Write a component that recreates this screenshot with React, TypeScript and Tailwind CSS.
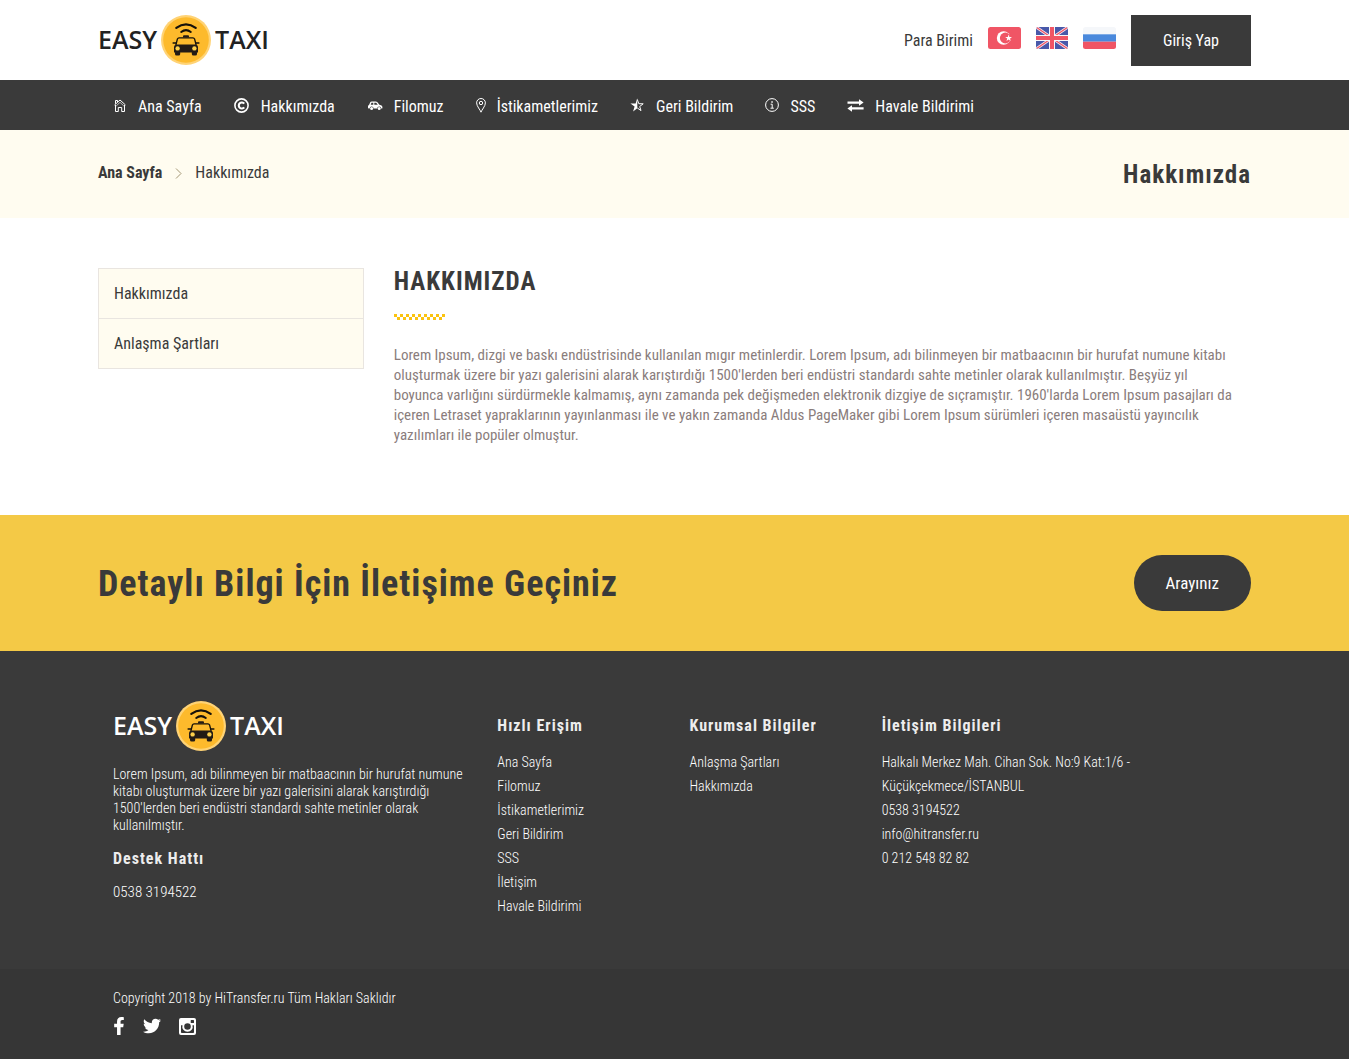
import React from 'react';
import { FaFacebookF, FaTwitter } from 'react-icons/fa';

interface LinkItem {
    label: string;
    href: string;
}

interface NavItem extends LinkItem {
    icon: React.ReactNode;
}

const HomeIcon = () => (
    <svg width="13" height="13" viewBox="0 0 13 13" fill="none" stroke="currentColor">
        <path d="M0.5 6L6 1L11.5 6M1.5 4.8V1.5H3.5V3" />
        <path d="M1.5 6V12.5H4.3V8.5H7.7V12.5H10.5V6" />
        <path d="M2.2 7L6 3.3L9.8 7" strokeWidth="0.7" />
    </svg>
);

const CopyrightIcon = () => (
    <svg width="16" height="15" viewBox="0 0 16 15" fill="none" stroke="currentColor">
        <circle cx="7.5" cy="7.5" r="6.6" strokeWidth="1.6" />
        <path d="M10.2 5.7A3 3 0 1 0 10.2 9.3" strokeWidth="2.1" />
    </svg>
);

const CarIcon = () => (
    <svg width="16" height="15" viewBox="0 0 16 15" fill="currentColor">
        <path
            fillRule="evenodd"
            d="M2 6.9L3.4 4.1Q3.8 3.4 4.8 3.4H8.6Q9.6 3.4 10.2 4L12.4 6.7L14 7.2Q15.4 7.7 15.4 9V9.9Q15.4 10.5 14.7 10.5H14.2A2 2 0 0 0 10.2 10.5H6.6A2 2 0 0 0 2.6 10.5H1.7Q1 10.5 1 9.8V8.1Q1 7.2 2 6.9ZM4.5 4.7L3.7 6.7H6.3V4.7ZM7.3 4.7V6.7H10.8L9.2 4.7Z"
        />
        <circle cx="4.6" cy="10.6" r="1.5" />
        <circle cx="12.2" cy="10.6" r="1.5" />
    </svg>
);

const PinIcon = () => (
    <svg width="10" height="15" viewBox="0 0 10 15" fill="none" stroke="currentColor">
        <path d="M5 14.2C4.4 12 0.6 8.2 0.6 4.9A4.4 4.4 0 0 1 9.4 4.9C9.4 8.2 5.6 12 5 14.2Z" />
        <circle cx="5" cy="5" r="1.7" />
    </svg>
);

const StarIcon = () => (
    <svg width="15" height="14" viewBox="0 0 15 14" fill="none" stroke="currentColor">
        <path d="M7.3 0.3V10.3L3.1 13.4L4.6 8.6L0.4 5.4H5.6Z" fill="currentColor" stroke="none" />
        <path d="M7.3 1.5L8.8 5.7L13.2 5.8L9.7 8.5L11 12.6L7.3 10" />
    </svg>
);

const InfoIcon = () => (
    <svg width="14" height="14" viewBox="0 0 14 14" fill="none" stroke="currentColor">
        <circle cx="7" cy="7" r="6.4" />
        <path d="M5.6 6.2H7.2V10M5.5 10.2H8.8" />
        <path d="M6.3 4H7.8" strokeWidth="1.4" />
    </svg>
);

const ExchangeIcon = () => (
    <svg width="17" height="13" viewBox="0 0 17 13" fill="currentColor">
        <path d="M0.5 2.4H12V0.3L16.6 3.6L12 6.7V4.7H0.5Z" />
        <path d="M16.6 8.3H5V6.3L0.4 9.5L5 12.7V10.6H16.6Z" />
    </svg>
);

const ChevronIcon = () => (
    <svg width="7" height="11" viewBox="0 0 7 11" fill="none" stroke="#a39675">
        <path d="M1 0.5L6 5.5L1 10.5" />
    </svg>
);

const InstagramIcon = () => (
    <svg width="17" height="17" viewBox="0 0 17 17" fill="currentColor">
        <path
            fillRule="evenodd"
            d="M2 0H15Q17 0 17 2V15Q17 17 15 17H2Q0 17 0 15V2Q0 0 2 0ZM2 7.2V14.2Q2 15 2.8 15H14.2Q15 15 15 14.2V7.2H13.5A5.2 5.2 0 1 1 3.5 7.2ZM12.3 2Q11.7 2 11.7 2.6V4.5Q11.7 5.1 12.3 5.1H14.3Q15 5.1 15 4.5V2.6Q15 2 14.3 2ZM8.5 5.2A3.3 3.3 0 1 0 8.5 11.8A3.3 3.3 0 1 0 8.5 5.2Z"
        />
    </svg>
);

const FlagTR = () => (
    <svg width="33" height="22" viewBox="0 0 33 22">
        <rect width="33" height="22" rx="2.5" fill="#f05565" />
        <circle cx="15.6" cy="11" r="6.8" fill="#fff" />
        <circle cx="17.3" cy="11" r="5.4" fill="#f05565" />
        <path d="M20.6 7.6L21.4 10L24 10.1L22 11.6L22.7 14L20.6 12.6L18.5 14L19.2 11.6L17.2 10.1L19.8 10Z" fill="#fff" />
    </svg>
);

const FlagUK = () => (
    <svg width="32" height="22" viewBox="0 0 32 22">
        <clipPath id="uk-clip">
            <rect width="32" height="22" rx="2.5" />
        </clipPath>
        <g clipPath="url(#uk-clip)">
            <rect width="32" height="22" fill="#4858a9" />
            <path d="M0 0L32 22M32 0L0 22" stroke="#f5e6ee" strokeWidth="2.8" />
            <path d="M0 0L32 22M32 0L0 22" stroke="#f05565" strokeWidth="1.2" />
            <path d="M16 0V22M0 11H32" stroke="#f5f7fa" strokeWidth="6" />
            <path d="M16 0V22M0 11H32" stroke="#f05565" strokeWidth="4" />
        </g>
    </svg>
);

const FlagRU = () => (
    <svg width="33" height="22" viewBox="0 0 33 22">
        <clipPath id="ru-clip">
            <rect width="33" height="22" rx="2.5" />
        </clipPath>
        <g clipPath="url(#ru-clip)">
            <rect width="33" height="7.3" fill="#f5f7fa" />
            <rect y="7.3" width="33" height="7.4" fill="#4a89dc" />
            <rect y="14.7" width="33" height="7.3" fill="#f05565" />
        </g>
    </svg>
);

const TaxiBadge = () => (
    <svg width="50" height="50" viewBox="0 0 50 50">
        <circle cx="25" cy="25" r="25" fill="#ffd375" />
        <circle cx="25" cy="25" r="22.8" fill="#fdba2c" />
        <g fill="none" stroke="#15110a" strokeLinecap="round">
            <path d="M15.3 12.8Q25 5.8 34.7 12.8" strokeWidth="2.2" />
            <path d="M20.2 17Q25 13.3 29.8 17" strokeWidth="2" />
            <path d="M15 29.5L16.4 24Q16.9 22.8 18 22.8H32Q33.1 22.8 33.6 24L35 29.5" strokeWidth="1.3" />
            <path d="M12.2 28H14.8M35.2 28H37.8" strokeWidth="1.6" />
        </g>
        <g fill="#231b15">
            <path d="M22 22.5V21.2Q22 20.2 23 20.2H27Q28 20.2 28 21.2V22.5Z" />
            <path d="M14.6 29.4H35.4Q37 30.4 37 32V37.4H13V32Q13 30.4 14.6 29.4Z" />
            <rect x="14" y="36" width="5.2" height="4.6" rx="1.6" />
            <rect x="30.8" y="36" width="5.2" height="4.6" rx="1.6" />
        </g>
        <circle cx="16.6" cy="33.4" r="2.2" fill="#fdd04c" />
        <circle cx="33.4" cy="33.4" r="2.2" fill="#fdd04c" />
    </svg>
);

const Logo: React.FC<{ className: string }> = ({ className }) => (
    <a
        href="#"
        aria-label="Easy Taxi"
        className={`flex w-fit items-center gap-1 font-['Open_Sans',sans-serif] text-[25px] leading-[48px] font-semibold ${className}`}
    >
        <span className="pb-[2px]">EASY</span>
        <TaxiBadge />
        <span className="pb-[2px]">TAXI</span>
    </a>
);

const navItems: NavItem[] = [
    { label: 'Ana Sayfa', href: '#', icon: <HomeIcon /> },
    { label: 'Hakkımızda', href: '#', icon: <CopyrightIcon /> },
    { label: 'Filomuz', href: '#', icon: <CarIcon /> },
    { label: 'İstikametlerimiz', href: '#', icon: <PinIcon /> },
    { label: 'Geri Bildirim', href: '#', icon: <StarIcon /> },
    { label: 'SSS', href: '#', icon: <InfoIcon /> },
    { label: 'Havale Bildirimi', href: '#', icon: <ExchangeIcon /> },
];

const quickLinks = ['Ana Sayfa', 'Filomuz', 'İstikametlerimiz', 'Geri Bildirim', 'SSS', 'İletişim', 'Havale Bildirimi'];
const corporateLinks = ['Anlaşma Şartları', 'Hakkımızda'];
const checks = Array.from({ length: 17 }, (_, i) => i);

const FooterLinks: React.FC<{ title: string; links: string[] }> = ({ title, links }) => (
    <div className="col-span-2 px-[15px] pt-[17px]">
        <h3 className="text-base leading-4 font-bold tracking-[1px] whitespace-nowrap">{title}</h3>
        <ul className="mt-4 text-sm leading-6 font-light text-white">
            {links.map((link) => (
                <li key={link}>
                    <a href="#" className="hover:underline">{link}</a>
                </li>
            ))}
        </ul>
    </div>
);

const App: React.FC = () => {
    return (
        <div className="bg-white font-['Roboto_Condensed','Liberation_Sans_Narrow',Roboto,sans-serif] text-[#3a3a3a]">
            <header>
                <div className="mx-auto flex max-w-[1183px] items-start justify-between px-[15px] pt-[15px] pb-[14px]">
                    <Logo className="text-[#222222]" />
                    <div className="flex items-center gap-[15px]">
                        <a href="#">Para Birimi</a>
                        <a href="#" aria-label="Türkçe" className="pb-[6px]"><FlagTR /></a>
                        <a href="#" aria-label="English" className="pb-[6px]"><FlagUK /></a>
                        <a href="#" aria-label="Русский" className="pb-[6px]"><FlagRU /></a>
                        <a href="#" className="bg-[#3a3a3a] px-8 leading-[51px] text-white">Giriş Yap</a>
                    </div>
                </div>
                <nav className="bg-[#3a3a3a] text-white">
                    <ul className="mx-auto flex max-w-[1183px] px-[15px]">
                        {navItems.map((item) => (
                            <li key={item.label}>
                                <a href={item.href} className="flex h-[50px] items-center gap-[11px] px-4">
                                    {item.icon}
                                    <span className="pt-1">{item.label}</span>
                                </a>
                            </li>
                        ))}
                    </ul>
                </nav>
            </header>

            <div className="bg-[#fffcf0]">
                <div className="mx-auto flex max-w-[1183px] justify-between px-[15px] pt-[30px] pb-[28px]">
                    <div className="flex h-[26px] items-center gap-[13px]">
                        <a href="#" className="font-bold">Ana Sayfa</a>
                        <ChevronIcon />
                        <span>Hakkımızda</span>
                    </div>
                    <h1 className="text-[25px] leading-[30px] font-bold tracking-[1px]">Hakkımızda</h1>
                </div>
            </div>

            <main className="mx-auto flex max-w-[1183px] pt-[50px] pb-[70px]">
                <aside className="w-1/4 px-[15px]">
                    <ul className="border border-[#e9e5e0] bg-[#fffcf0]">
                        <li className="border-b border-[#e9e5e0]">
                            <a href="#" className="block px-[15px] leading-[49px]">Hakkımızda</a>
                        </li>
                        <li>
                            <a href="#" className="block px-[15px] leading-[49px]">Anlaşma Şartları</a>
                        </li>
                    </ul>
                </aside>
                <section className="w-3/4 pr-[30px] pl-[15px]">
                    <h2 className="text-[25px] leading-7 font-bold tracking-[1px]">HAKKIMIZDA</h2>
                    <svg width="51" height="6" viewBox="0 0 51 6" className="mt-[18px] mb-[25px]" fill="#fbc310" shapeRendering="crispEdges">
                        {checks.map((i) => (
                            <rect key={i} x={i * 3} y={i % 2 === 0 ? 0 : 3} width="3" height="3" />
                        ))}
                    </svg>
                    <p className="text-[15px] leading-5 text-[#8a7d7c]">
                        Lorem Ipsum, dizgi ve baskı endüstrisinde kullanılan mıgır metinlerdir. Lorem Ipsum, adı bilinmeyen bir matbaacının bir hurufat numune kitabı oluşturmak üzere bir yazı galerisini alarak karıştırdığı 1500'lerden beri endüstri standardı sahte metinler olarak kullanılmıştır. Beşyüz yıl boyunca varlığını sürdürmekle kalmamış, aynı zamanda pek değişmeden elektronik dizgiye de sıçramıştır. 1960'larda Lorem Ipsum pasajları da içeren Letraset yapraklarının yayınlanması ile ve yakın zamanda Aldus PageMaker gibi Lorem Ipsum sürümleri içeren masaüstü yayıncılık yazılımları ile popüler olmuştur.
                    </p>
                </section>
            </main>

            <section className="bg-[#f4c946]">
                <div className="mx-auto flex max-w-[1183px] items-center justify-between px-[15px] py-10">
                    <h2 className="pt-[2px] text-4xl font-bold tracking-[1px]">Detaylı Bilgi İçin İletişime Geçiniz</h2>
                    <a href="#" className="rounded-full bg-[#3a3a3a] px-8 text-[17px] leading-[56px] text-white">Arayınız</a>
                </div>
            </section>

            <footer className="bg-[#3a3a3a] text-[#ededed]">
                <div className="mx-auto max-w-[1183px] px-[15px] pt-[50px] pb-[51px]">
                    <div className="grid grid-cols-12">
                        <div className="col-span-4 px-[15px]">
                            <Logo className="text-white" />
                            <p className="mt-[15px] text-sm leading-[17px] font-light text-white">
                                Lorem Ipsum, adı bilinmeyen bir matbaacının bir hurufat numune kitabı oluşturmak üzere bir yazı galerisini alarak karıştırdığı 1500'lerden beri endüstri standardı sahte metinler olarak kullanılmıştır.
                            </p>
                            <h3 className="mt-[13px] text-base font-bold tracking-[1px]">Destek Hattı</h3>
                            <p className="mt-[11px] text-[15px] leading-5 font-light text-white">0538 3194522</p>
                        </div>
                        <FooterLinks title="Hızlı Erişim" links={quickLinks} />
                        <FooterLinks title="Kurumsal Bilgiler" links={corporateLinks} />
                        <div className="col-span-4 px-[15px] pt-[17px]">
                            <h3 className="text-base leading-4 font-bold tracking-[1px]">İletişim Bilgileri</h3>
                            <address className="mt-4 text-sm leading-6 font-light text-white not-italic">
                                <p className="max-w-[260px]">Halkalı Merkez Mah. Cihan Sok. No:9 Kat:1/6 - Küçükçekmece/İSTANBUL</p>
                                <p>0538 3194522</p>
                                <p><a href="mailto:info@hitransfer.ru">info@hitransfer.ru</a></p>
                                <p>0 212 548 82 82</p>
                            </address>
                        </div>
                    </div>
                </div>
                <div className="bg-[#363636] text-white">
                    <div className="mx-auto max-w-[1183px] px-[30px] pt-[19px] pb-6">
                        <p className="text-sm font-light">Copyright 2018 by HiTransfer.ru Tüm Hakları Saklıdır</p>
                        <div className="mt-[9px] flex items-center gap-[18px]">
                            <a href="#" aria-label="Facebook"><FaFacebookF size={18} className="w-3" /></a>
                            <a href="#" aria-label="Twitter"><FaTwitter size={18} /></a>
                            <a href="#" aria-label="Instagram"><InstagramIcon /></a>
                        </div>
                    </div>
                </div>
            </footer>
        </div>
    );
};

export default App;
